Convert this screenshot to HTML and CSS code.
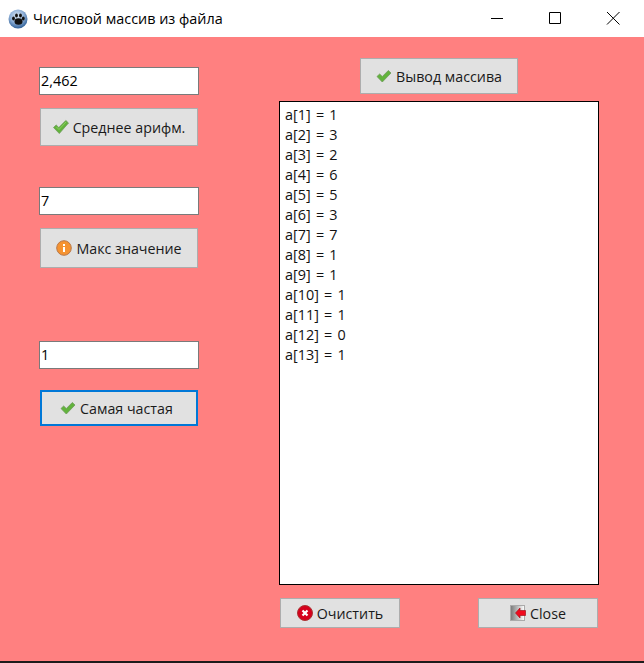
FILE: index.html
```html
<!DOCTYPE html>
<html lang="ru">
<head>
<meta charset="utf-8">
<title>Числовой массив из файла</title>
<link rel="stylesheet" href="styles.css">
</head>
<body>
<div class="window">
  <header class="titlebar">
    <svg class="app-icon" width="20" height="20" viewBox="0 0 20 20">
      <defs>
        <radialGradient id="orb" cx="45%" cy="35%" r="65%">
          <stop offset="0" stop-color="#dfe9f5"/><stop offset=".55" stop-color="#8fb0d8"/><stop offset="1" stop-color="#2f5f96"/>
        </radialGradient>
      </defs>
      <circle cx="10" cy="10" r="9.5" fill="url(#orb)"/>
      <ellipse cx="10.5" cy="12.5" rx="4" ry="3.2" fill="#111"/>
      <ellipse cx="5.5" cy="9.5" rx="1.4" ry="1.9" fill="#111"/>
      <ellipse cx="8.5" cy="6.5" rx="1.4" ry="2" fill="#111"/>
      <ellipse cx="12.5" cy="6.5" rx="1.4" ry="2" fill="#111"/>
      <ellipse cx="15.3" cy="9.5" rx="1.4" ry="1.9" fill="#111"/>
    </svg>
    <span class="title">Числовой массив из файла</span>
    <div class="controls">
      <svg class="ctl" width="46" height="37" viewBox="0 0 46 37"><path d="M17 18.5h12" stroke="#000" fill="none"/></svg>
      <svg class="ctl" width="46" height="37" viewBox="0 0 46 37"><path d="M17.5 12.5h11v11h-11z" stroke="#000" fill="none"/></svg>
      <svg class="ctl" width="46" height="37" viewBox="0 0 46 37"><path d="M17 12l12.500 12.500M29.500 12L17 24.500" stroke="#000" fill="none"/></svg>
    </div>
  </header>
  <main class="client">
    <section class="left">
      <input class="field first" value="2,462">
      <button class="btn b-mean"><svg class="ic" width="16" height="16" viewBox="0 0 16 16"><use href="#check2"/></svg>Среднее арифм.</button>
      <input class="field second" value="7">
      <button class="btn b-max">
        <svg class="ic" width="16" height="16" viewBox="0 0 16 16">
          <circle cx="8" cy="8" r="7.300" fill="#f59331" stroke="#b9794a"/>
          <rect x="7" y="7" width="2" height="5" fill="#fff"/><rect x="7" y="4" width="2" height="2" fill="#fff"/>
        </svg>Макс значение</button>
      <input class="field third" value="1">
      <button class="btn b-freq focused"><svg class="ic" width="16" height="16" viewBox="0 0 16 16"><use href="#check"/></svg>Самая частая</button>
    </section>
    <section class="right">
      <button class="btn b-out"><svg class="ic" width="16" height="16" viewBox="0 0 16 16"><use href="#check"/></svg>Вывод массива</button>
      <div class="memo">
        <div>a[1] = 1</div><div>a[2] = 3</div><div>a[3] = 2</div><div>a[4] = 6</div><div>a[5] = 5</div><div>a[6] = 3</div><div>a[7] = 7</div><div>a[8] = 1</div><div>a[9] = 1</div><div>a[10] = 1</div><div>a[11] = 1</div><div>a[12] = 0</div><div>a[13] = 1</div>
      </div>
      <div class="actions">
        <button class="btn small">
          <svg class="ic" width="16" height="16" viewBox="0 0 16 16">
            <circle cx="8" cy="8" r="7.500" fill="#d5001c" stroke="#a33"/>
            <path d="M5.500 5.500l5 5M10.500 5.500l-5 5" stroke="#fff" stroke-width="2.200"/>
          </svg>Очистить</button>
        <button class="btn small">
          <svg class="ic door" width="16" height="16" viewBox="0 0 16 16">
            <defs><linearGradient id="door"><stop offset="0" stop-color="#777"/><stop offset="1" stop-color="#fff"/></linearGradient></defs>
            <rect x=".5" y=".5" width="14" height="15" fill="url(#door)" stroke="#aaa"/>
            <path d="M5.500 8l4.500-5v2.500h5.500v5h-5.500v2.500z" fill="#f00a1e" stroke="#a5141e" stroke-width=".7"/>
          </svg>Close</button>
      </div>
    </section>
  </main>
  <div class="edge"></div>
</div>
<svg class="defs" width="0" height="0">
  <symbol id="check" viewBox="0 0 16 16">
    <path d="M1 8.500l2.700-2.500 2.600 2.600L12.300 2.500 15 5l-8.700 9z" fill="#62b33c" stroke="#6f9a5c" stroke-width=".8"/>
  </symbol>
  <symbol id="check2" viewBox="0 0 16 16">
    <path d="M.5 8.500l2.700-2.500 2.600 2.600L12.800 1.500 15.500 4l-9.200 10.500z" fill="#62b33c" stroke="#6f9a5c" stroke-width=".8"/>
    <path d="M3.500 8l2.500 2.500L13 3" stroke="#8bd05f" fill="none"/>
  </symbol>
</svg>
</body>
</html>
```
FILE: styles.css
```css
* { box-sizing: border-box; }
html, body { margin: 0; padding: 0; }
body { font-family: "Open Sans", "Noto Sans", sans-serif; font-size: 14.4px; color: #111; }
.window { width: 644px; height: 663px; display: flex; flex-direction: column; overflow: hidden; }
.titlebar { height: 37px; flex: none; background: #fff; display: flex; align-items: center; padding-left: 8px; }
.app-icon { flex: none; margin-right: 5px; }
.title { font-size: 14.4px; color: #000; }
.controls { margin-left: auto; display: flex; margin-right: 8px; }
.ctl { display: block; margin-left: 12px; }
.client { flex: 1; background: #ff8080; display: flex; min-height: 0; }
.left { width: 279px; flex: none; padding: 30px 0 0 39px; display: flex; flex-direction: column; align-items: flex-start; }
.right { width: 320px; flex: none; display: flex; flex-direction: column; padding-top: 21px; }
.field { display: block; width: 160px; height: 28px; border: 1px solid #7a7a7a; background: #fff; padding: 0 1px 2px; font: inherit; font-size: 14.4px; color: #000; outline: none; }
.second { margin-top: 41px; }
.third { margin-top: 73px; }
.btn { display: flex; align-items: center; justify-content: center; width: 158px; margin: 0; padding: 0; background: #e1e1e1; border: 1px solid #adadad; font: inherit; font-size: 14.25px; color: #1a1a1a; }
.ic { flex: none; margin-right: 4px; }
.b-mean { height: 38px; margin: 13px 0 0 1px; }
.b-max { height: 40px; margin: 13px 0 0 1px; }
.b-freq { height: 36px; margin: 21px 0 0 1px; padding-right: 5px; }
.focused { border: 2px solid #0078d7; }
.b-out { height: 36px; margin-left: 81px; flex: none; }
.memo { height: 484px; margin-top: 7px; flex: none; background: #fff; border: 1px solid #000; padding: 3px 5px; font-size: 14.4px; line-height: 20px; word-spacing: 1.5px; color: #111; }
.actions { display: flex; justify-content: space-between; margin: 13px 1px 0; }
.small { width: 120px; height: 30px; }
.edge { height: 2px; flex: none; background: #1c1c1c; }
.defs { position: absolute; }
```
